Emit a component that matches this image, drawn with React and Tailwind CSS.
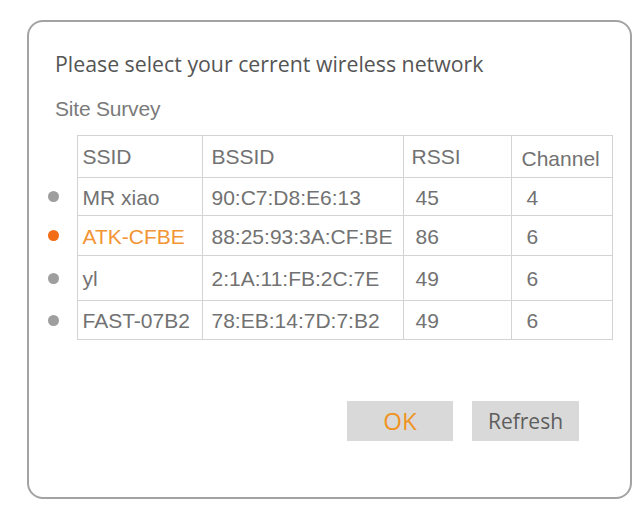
import React from "react";

const networks = [
  { ssid: "MR xiao", bssid: "90:C7:D8:E6:13", rssi: "45", channel: "4", h: "h-[38px]" },
  { ssid: "ATK-CFBE", bssid: "88:25:93:3A:CF:BE", rssi: "86", channel: "6", h: "h-[40px]", active: true },
  { ssid: "yl", bssid: "2:1A:11:FB:2C:7E", rssi: "49", channel: "6", h: "h-[45px]" },
  { ssid: "FAST-07B2", bssid: "78:EB:14:7D:7:B2", rssi: "49", channel: "6", h: "h-[39px]" },
];

const cell = "border border-[#d3d3d3] align-middle";

const App = () => {
  return (
    <div className="w-[642px] h-[516px] bg-white pt-[20px] pl-[27px]">
      <div className="w-[605px] h-[479px] border-2 border-[#a3a3a3] rounded-[16px] flex flex-col items-start">
        <h1 className="pt-[27px] pl-[26px] text-[21.3px] leading-[29px] text-[#555555] font-['Open_Sans',sans-serif]">
          Please select your cerrent wireless network
        </h1>
        <p className="mt-[19px] pl-[26px] text-[21px] leading-[24px] tracking-[-0.2px] text-[#7a7a7a] font-['Liberation_Sans',Arial,sans-serif]">
          Site Survey
        </p>

        <table className="mt-[14px] table-fixed w-[583px] border-collapse text-[21px] leading-[24px] text-[#727272] font-['Liberation_Sans',Arial,sans-serif]">
          <tbody>
            <tr className="h-[42px]">
              <td className="w-[48px]"></td>
              <td className={`${cell} w-[125px] pl-[5px]`}>SSID</td>
              <td className={`${cell} w-[201px] pl-[9px]`}>BSSID</td>
              <td className={`${cell} w-[108px] pl-[8px]`}>RSSI</td>
              <td className={`${cell} w-[101px] pl-[10px] pt-[5px]`}>Channel</td>
            </tr>
            {networks.map((n) => (
              <tr key={n.ssid} className={n.h}>
                <td>
                  <div className="flex justify-center pl-[1px]">
                    <span
                      className={`block shrink-0 w-[11px] h-[11px] rounded-full ${
                        n.active ? "bg-[#f26d16]" : "bg-[#9e9e9e]"
                      }`}
                    />
                  </div>
                </td>
                <td className={`${cell} pl-[5px] pt-[2px] whitespace-nowrap ${n.active ? "text-[#f39534]" : ""}`}>{n.ssid}</td>
                <td className={`${cell} pl-[9px] pt-[2px] whitespace-nowrap`}>{n.bssid}</td>
                <td className={`${cell} pl-[12px] pt-[2px]`}>{n.rssi}</td>
                <td className={`${cell} pl-[15px] pt-[2px]`}>{n.channel}</td>
              </tr>
            ))}
          </tbody>
        </table>

        <div className="mt-[61px] self-stretch flex justify-end gap-[19px] pr-[51px] font-['Open_Sans',sans-serif]">
          <button className="w-[106px] h-[40px] bg-[#d9d9d9] text-[#f0931f] text-[24px] leading-none">
            OK
          </button>
          <button className="w-[107px] h-[40px] bg-[#d9d9d9] text-[#5e5e5e] text-[21px] leading-none">
            Refresh
          </button>
        </div>
      </div>
    </div>
  );
};

export default App;
